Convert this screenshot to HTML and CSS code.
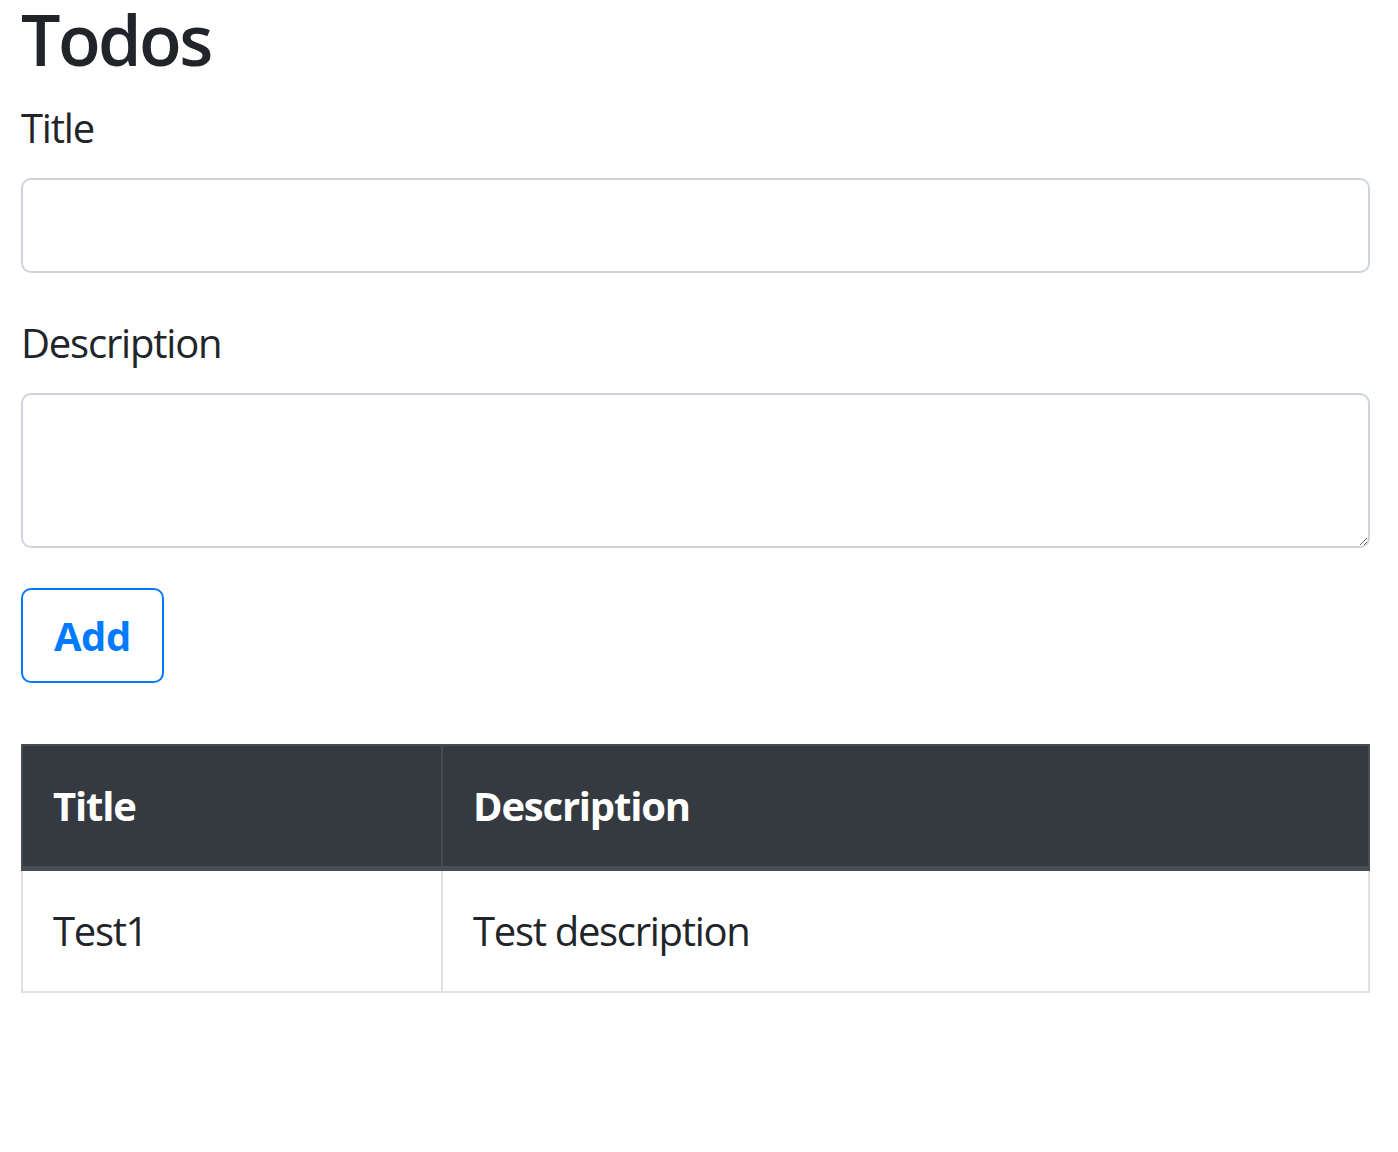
FILE: index.html
```html
<!DOCTYPE html>
<html lang="en">
<head>
<meta charset="utf-8">
<title>Todos</title>
<link rel="stylesheet" href="styles.css">
</head>
<body>
<div class="page">
  <h1 class="heading">Todos</h1>
  <form class="todo-form">
    <div class="form-group">
      <label class="form-label" for="title">Title</label>
      <input class="form-control" id="title" type="text">
    </div>
    <div class="form-group">
      <label class="form-label" for="description">Description</label>
      <textarea class="form-control form-textarea" id="description" rows="2"></textarea>
    </div>
    <button type="button" class="btn-add">Add</button>
  </form>
  <table class="todo-table">
    <colgroup>
      <col class="col-title">
      <col>
    </colgroup>
    <thead>
      <tr>
        <th>Title</th>
        <th>Description</th>
      </tr>
    </thead>
    <tbody>
      <tr>
        <td>Test1</td>
        <td>Test description</td>
      </tr>
    </tbody>
  </table>
</div>
</body>
</html>
```
FILE: styles.css
```css
* { box-sizing: border-box; }
html, body { margin: 0; padding: 0; background: #fff; }
body {
  font-family: "Open Sans", "Noto Sans", sans-serif;
  font-size: 40px;
  line-height: 60px;
  color: #212529;
}
.page {
  padding: 0 28px 0 21px;
}
.heading {
  margin: 0 0 20px;
  font-size: 70px;
  line-height: 78px;
  font-weight: 600;
  letter-spacing: -2.6px;
}
.todo-form {
  margin: 0 0 61px;
}
.form-group {
  display: flex;
  flex-direction: column;
  margin-bottom: 40px;
}
.form-label {
  display: block;
  margin-bottom: 20px;
  line-height: 60px;
  letter-spacing: -1.2px;
}
.form-control {
  display: block;
  width: 100%;
  height: 95px;
  padding: 15px 30px;
  font: inherit;
  color: #495057;
  background: #fff;
  border: 2.5px solid #ced4da;
  border-radius: 10px;
  outline: none;
}
.form-textarea {
  height: 155px;
  resize: vertical;
}
.btn-add {
  display: inline-block;
  height: 95px;
  padding: 15px 31px;
  font-family: inherit;
  font-size: 40px;
  line-height: 60px;
  font-weight: 700;
  letter-spacing: -0.5px;
  color: #007bff;
  background: transparent;
  border: 2.5px solid #007bff;
  border-radius: 10px;
  cursor: pointer;
}
.todo-table {
  width: 100%;
  border-collapse: collapse;
}
.col-title { width: 420px; }
.todo-table th,
.todo-table td {
  padding: 30px;
  line-height: 60px;
  text-align: left;
  vertical-align: top;
}
.todo-table th {
  background: #343a40;
  color: #fff;
  font-weight: 700;
  border: 2.5px solid #454d55;
  border-bottom-width: 5px;
  letter-spacing: -1.2px;
}
.todo-table td {
  border: 2.5px solid #dee2e6;
  letter-spacing: -1.3px;
}
```
